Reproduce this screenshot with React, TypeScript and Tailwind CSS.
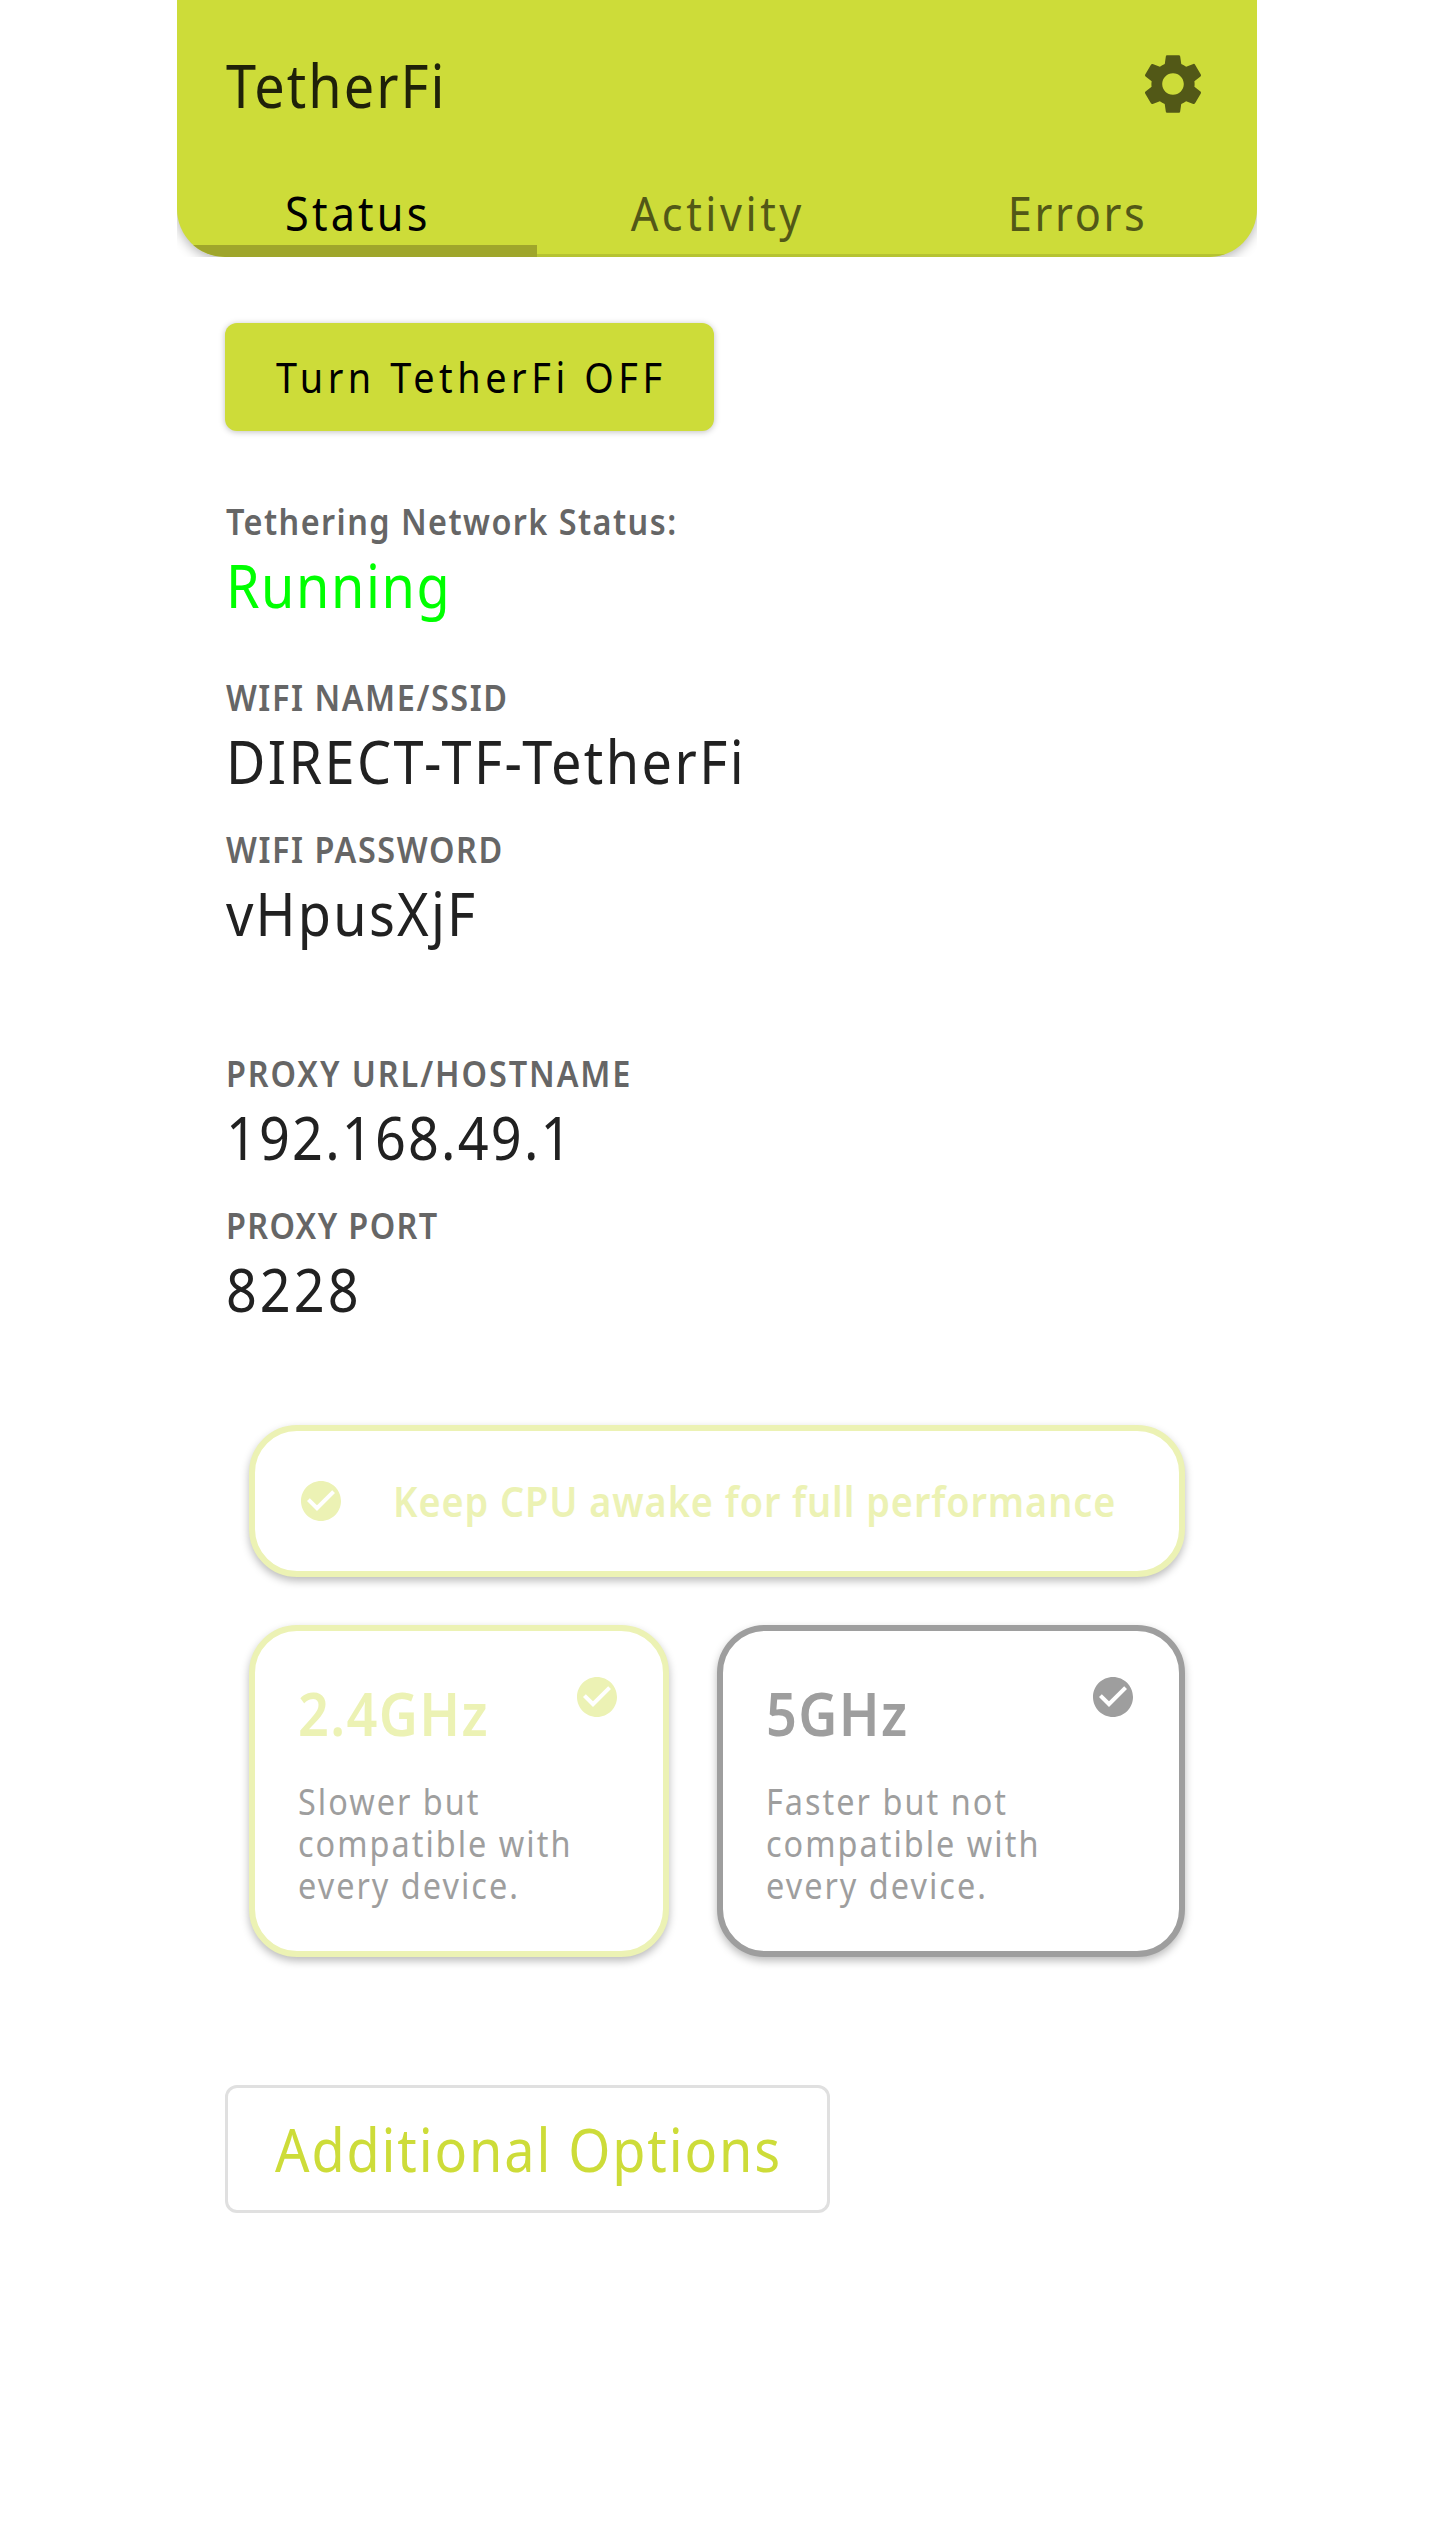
import type { ReactNode } from "react";
import { MdSettings } from "react-icons/md";

function Label({ text, tracking }: { text: string; tracking: string }) {
  return (
    <div
      className={`h-[48px] origin-left scale-x-90 pt-[1px] pl-[1px] text-[36px] leading-[48px] font-semibold whitespace-nowrap text-[#666666] ${tracking}`}
    >
      {text}
    </div>
  );
}

function Value({ text, tracking, color = "text-[#212121]" }: { text: string; tracking: string; color?: string }) {
  return (
    <div
      className={`mt-[4px] h-[72px] origin-left scale-x-90 pl-[1px] text-[60px] leading-[72px] whitespace-nowrap ${color} ${tracking}`}
    >
      {text}
    </div>
  );
}

function CheckCircle({ className }: { className: string }) {
  return (
    <svg viewBox="0 0 24 24" className={`size-[48px] shrink-0 ${className}`} fill="currentColor">
      <path d="M12 2C6.48 2 2 6.48 2 12s4.48 10 10 10 10-4.48 10-10S17.52 2 12 2zm-2 15l-5-5 1.41-1.41L10 14.17l7.59-7.59L19 8l-9 9z" />
    </svg>
  );
}

function Tab({ text, tracking, active = false }: { text: string; tracking: string; active?: boolean }) {
  return (
    <div
      className={`h-[137px] flex-1 pt-[63px] pl-[2px] text-center text-[48px] leading-[60px] whitespace-nowrap ${
        active ? "border-b-[12px] border-[#9fa62b] text-black" : "border-b-[3px] border-[#b6c332] text-[#525817]"
      }`}
    >
      <span className={`inline-block scale-x-90 ${tracking}`}>{text}</span>
    </div>
  );
}

function BandCard({
  title,
  tracking,
  lines,
  color,
  border,
  width,
}: {
  title: string;
  tracking: string;
  lines: ReactNode;
  color: string;
  border: string;
  width: string;
}) {
  return (
    <div
      className={`flex h-[332px] items-start justify-between rounded-[48px] border-[6px] bg-white p-[42px] shadow-[0_4px_9px_rgba(0,0,0,0.27)] ${border} ${width}`}
    >
      <div className="w-[250px] pt-[4px] pl-[1px]">
        <div className={`h-[72px] origin-left scale-x-90 text-[60px] leading-[72px] font-semibold whitespace-nowrap ${tracking} ${color}`}>
          {title}
        </div>
        <div className="mt-[32px] origin-left scale-x-90 text-[36px] leading-[42px] tracking-[2.25px] whitespace-nowrap text-[#9e9e9e]">
          {lines}
        </div>
      </div>
      <CheckCircle className={color} />
    </div>
  );
}

export default function App() {
  return (
    <div className="flex min-h-[2546px] w-full justify-center bg-white font-['Noto_Sans',sans-serif]">
      <div className="w-[1080px]">
        <div className="h-[257px] overflow-hidden">
          <header className="h-[257px] overflow-hidden rounded-b-[48px] bg-[#cddc39] pt-[48px] shadow-[0_3px_12px_rgba(0,0,0,0.3)]">
            <div className="flex h-[72px] items-center justify-between pr-[48px] pl-[49px]">
              <h1 className="origin-left scale-x-90 pt-[1px] text-[60px] leading-[72px] tracking-[2.25px] text-[#1f2109]">
                TetherFi
              </h1>
              <MdSettings className="size-[72px] text-[#525817]" />
            </div>
            <nav className="flex">
              <Tab text="Status" tracking="tracking-[3.5px]" active />
              <Tab text="Activity" tracking="tracking-[3.95px]" />
              <Tab text="Errors" tracking="tracking-[3px]" />
            </nav>
          </header>
        </div>

        <main className="flex flex-col items-start px-[48px] pt-[66px]">
          <button className="flex h-[108px] w-[489px] items-center rounded-[12px] bg-[#cddc39] pl-[51px] text-black shadow-[0_1px_6px_rgba(0,0,0,0.25)]">
            <span className="origin-left scale-x-90 text-[42px] leading-[48px] tracking-[5.09px] whitespace-nowrap">
              Turn TetherFi OFF
            </span>
          </button>

          <section className="mt-[66px]">
            <Label text="Tethering Network Status:" tracking="tracking-[1.61px]" />
            <Value text="Running" tracking="tracking-[1.79px]" color="text-[#00ff00]" />
          </section>

          <section className="mt-[52px] flex flex-col gap-[28px]">
            <div>
              <Label text="WIFI NAME/SSID" tracking="tracking-[1.75px]" />
              <Value text="DIRECT-TF-TetherFi" tracking="tracking-[2.72px]" />
            </div>
            <div>
              <Label text="WIFI PASSWORD" tracking="tracking-[1.78px]" />
              <Value text="vHpusXjF" tracking="tracking-[2.5px]" />
            </div>
          </section>

          <section className="mt-[100px] flex flex-col gap-[28px]">
            <div>
              <Label text="PROXY URL/HOSTNAME" tracking="tracking-[2.14px]" />
              <Value text="192.168.49.1" tracking="tracking-[2.44px]" />
            </div>
            <div>
              <Label text="PROXY PORT" tracking="tracking-[1.52px]" />
              <Value text="8228" tracking="tracking-[3.38px]" />
            </div>
          </section>

          <section className="mt-[100px] ml-[24px] flex w-[936px] flex-col gap-[48px]">
            <div className="flex h-[152px] items-center gap-[48px] rounded-[48px] border-[6px] border-[#ecf2b4] bg-white px-[42px] shadow-[0_4px_9px_rgba(0,0,0,0.27)]">
              <CheckCircle className="text-[#ecf2b4]" />
              <span className="origin-left scale-x-90 text-[42px] leading-[48px] font-semibold tracking-[1.06px] whitespace-nowrap text-[#ecf2b4]">
                Keep CPU awake for full performance
              </span>
            </div>
            <div className="flex gap-[48px]">
              <BandCard
                title="2.4GHz"
                tracking="tracking-[1.5px]"
                color="text-[#ecf2b4]"
                border="border-[#ecf2b4]"
                width="w-[420px]"
                lines={
                  <>
                    Slower but
                    <br />
                    compatible with
                    <br />
                    every device.
                  </>
                }
              />
              <BandCard
                title="5GHz"
                tracking="tracking-[1.5px]"
                color="text-[#9e9e9e]"
                border="border-[#9e9e9e]"
                width="w-[468px]"
                lines={
                  <>
                    Faster but not
                    <br />
                    compatible with
                    <br />
                    every device.
                  </>
                }
              />
            </div>
          </section>

          <button className="mt-[128px] flex h-[128px] w-[605px] items-center rounded-[12px] border-[3px] border-[#e0e0e0] bg-white pb-[1px] pl-[47px] text-[#cddc39]">
            <span className="origin-left scale-x-90 text-[60px] leading-[72px] tracking-[2.08px] whitespace-nowrap">
              Additional Options
            </span>
          </button>
        </main>
      </div>
    </div>
  );
}
